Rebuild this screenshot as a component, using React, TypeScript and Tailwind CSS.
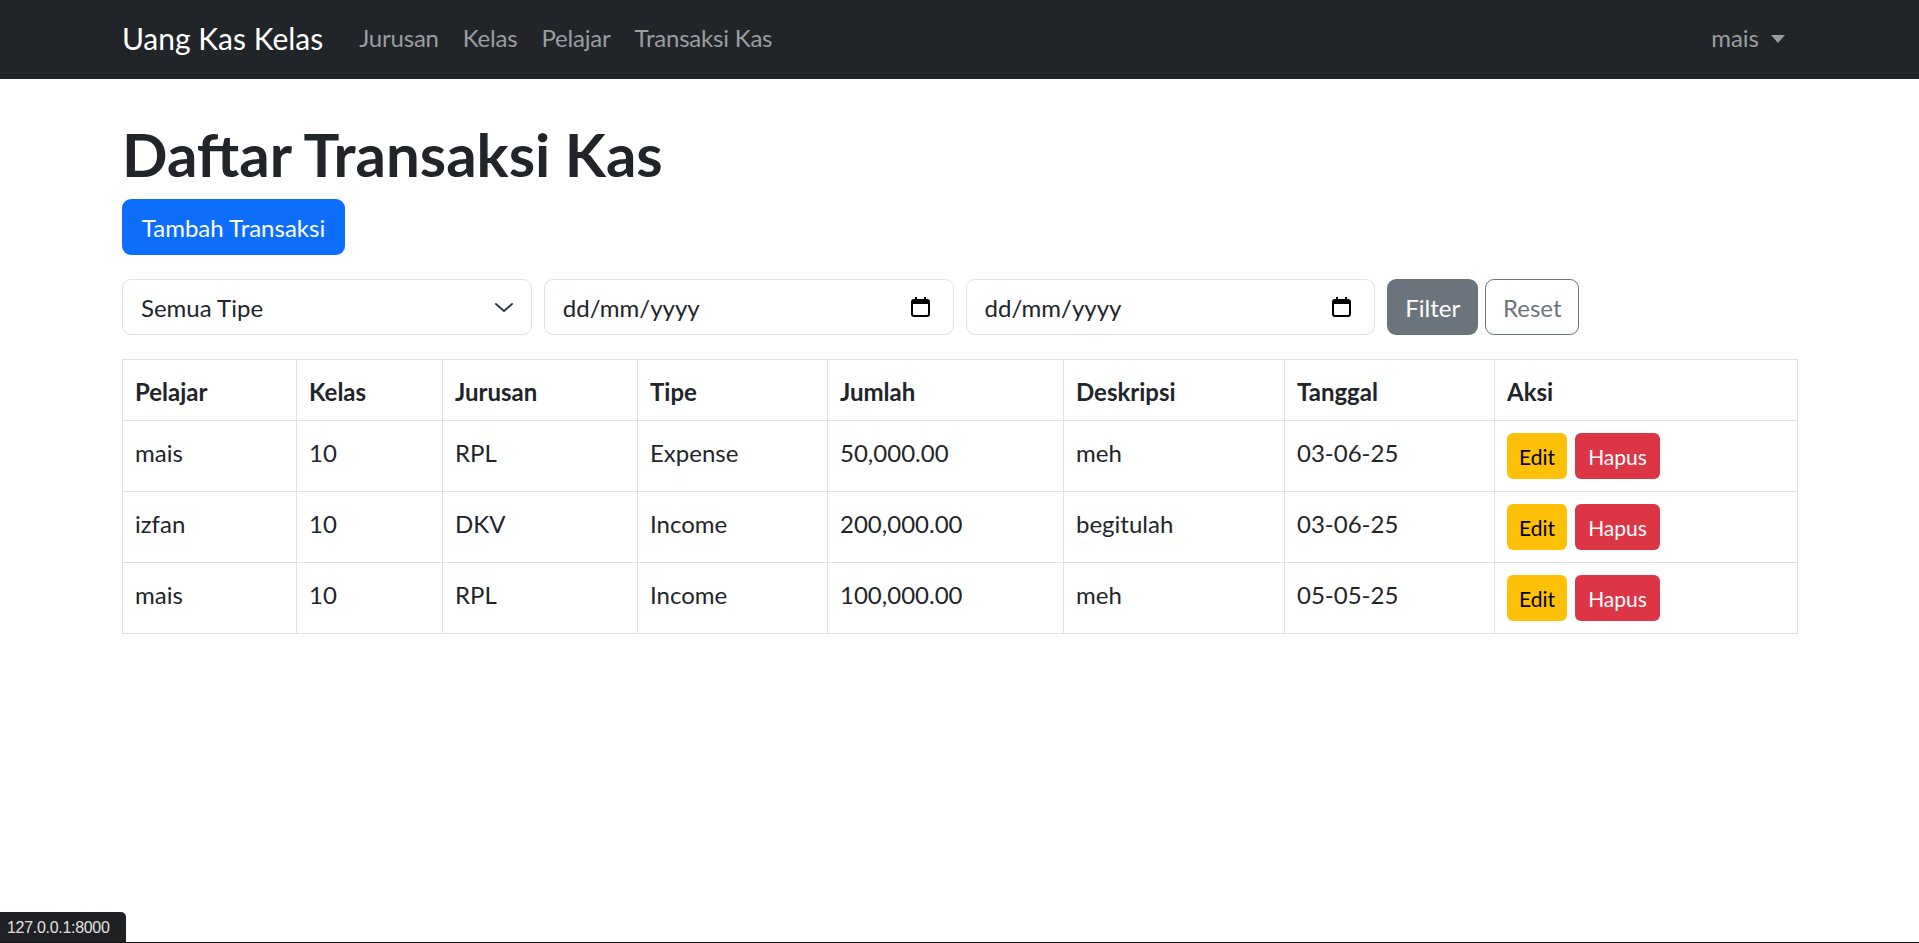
import React from 'react';

const rows = [
  { pelajar: 'mais', kelas: '10', jurusan: 'RPL', tipe: 'Expense', jumlah: '50,000.00', deskripsi: 'meh', tanggal: '03-06-25' },
  { pelajar: 'izfan', kelas: '10', jurusan: 'DKV', tipe: 'Income', jumlah: '200,000.00', deskripsi: 'begitulah', tanggal: '03-06-25' },
  { pelajar: 'mais', kelas: '10', jurusan: 'RPL', tipe: 'Income', jumlah: '100,000.00', deskripsi: 'meh', tanggal: '05-05-25' },
];

const headers = [
  { label: 'Pelajar', w: 'w-[174px]' },
  { label: 'Kelas', w: 'w-[146px]' },
  { label: 'Jurusan', w: 'w-[195px]' },
  { label: 'Tipe', w: 'w-[190px]' },
  { label: 'Jumlah', w: 'w-[236px]' },
  { label: 'Deskripsi', w: 'w-[221px]' },
  { label: 'Tanggal', w: 'w-[210px]' },
  { label: 'Aksi', w: 'w-[303px]' },
];

function CalendarIcon() {
  return (
    <svg width="19" height="20" viewBox="0 0 19 20" aria-hidden="true">
      <rect x="1" y="3" width="17" height="16" rx="2" fill="none" stroke="#000" strokeWidth="2" />
      <rect x="1" y="3" width="17" height="4" fill="#000" />
      <rect x="4" y="0" width="2" height="4" fill="#000" />
      <rect x="13" y="0" width="2" height="4" fill="#000" />
    </svg>
  );
}

function DateField() {
  return (
    <div className="flex h-[56px] items-center justify-between rounded-[9px] border border-[#dee2e6] bg-white pl-[18px] pr-[23px] text-[24px] text-[#212529]">
      <span className="pt-[2px]">dd/mm/yyyy</span>
      <CalendarIcon />
    </div>
  );
}

export default function App() {
  return (
    <div className="min-h-screen bg-white text-[#212529]" style={{ fontFamily: 'Lato, "Liberation Sans", sans-serif' }}>
      {/* navbar */}
      <nav className="h-[79px] bg-[#212529]">
        <div className="mx-auto flex h-full w-[1675px] items-center justify-between pb-[3px]">
          <div className="flex items-center">
            <span className="mr-[24px] text-[30px] leading-[45px] text-white">Uang Kas Kelas</span>
            <div className="flex text-[24px] leading-[36px] tracking-[-0.2px] text-[#9a9da0]">
              <a className="px-[12px]">Jurusan</a>
              <a className="px-[12px]">Kelas</a>
              <a className="px-[12px]">Pelajar</a>
              <a className="px-[12px]">Transaksi Kas</a>
            </div>
          </div>
          <a className="flex items-center px-[12px] text-[24px] leading-[36px] text-[#9a9da0]">
            mais
            <span className="ml-[12px] mt-[2px] h-0 w-0 border-x-[7px] border-t-[8px] border-x-transparent border-t-[#9a9da0]" />
          </a>
        </div>
      </nav>

      <main className="mx-auto w-[1675px] pt-[39px]">
        <h1 className="mb-[9px] text-[60px] font-bold leading-[72px]">Daftar Transaksi Kas</h1>

        <button className="mb-[24px] flex h-[56px] w-[223px] items-center justify-center rounded-[9px] bg-[#0d6efd] pt-[2px] text-[24px] text-white">
          Tambah Transaksi
        </button>

        {/* filter */}
        <div className="mb-[24px] grid grid-cols-4 gap-x-[12px]">
          <div className="flex h-[56px] items-center justify-between rounded-[9px] border border-[#dee2e6] bg-white pl-[18px] pr-[17px] text-[24px]">
            <span className="pt-[2px]">Semua Tipe</span>
            <svg width="20" height="11" viewBox="0 0 20 11" aria-hidden="true">
              <polyline points="2,2 10,9 18,2" fill="none" stroke="#343a40" strokeWidth="2" strokeLinecap="round" strokeLinejoin="round" />
            </svg>
          </div>
          <DateField />
          <DateField />
          <div className="flex gap-[7px]">
            <button className="flex h-[56px] w-[91px] items-center justify-center rounded-[9px] bg-[#6c757d] pt-[2px] text-[24px] text-white">
              Filter
            </button>
            <button className="flex h-[56px] w-[94px] items-center justify-center rounded-[9px] border-[1.5px] border-[#6c757d] pt-[2px] text-[24px] text-[#6c757d]">
              Reset
            </button>
          </div>
        </div>

        {/* table */}
        <table className="w-[1675px] table-fixed border-collapse text-left text-[24px]">
          <thead>
            <tr>
              {headers.map((h) => (
                <th key={h.label} className={`${h.w} border border-[#dee2e6] px-[12px] pb-[10px] pt-[14px] align-top font-bold leading-[36px]`}>
                  {h.label}
                </th>
              ))}
            </tr>
          </thead>
          <tbody>
            {rows.map((r, i) => (
              <tr key={i}>
                {[r.pelajar, r.kelas, r.jurusan, r.tipe, r.jumlah, r.deskripsi, r.tanggal].map((v, j) => (
                  <td key={j} className="border border-[#dee2e6] px-[12px] pb-[10px] pt-[14px] align-top leading-[36px]">
                    {v}
                  </td>
                ))}
                <td className="border border-[#dee2e6] px-[12px] py-[12px] align-top">
                  <div className="flex gap-[8px]">
                    <button className="flex h-[46px] w-[60px] items-center justify-center rounded-[6px] bg-[#ffc107] pt-[2px] text-[21px] text-black">
                      Edit
                    </button>
                    <button className="flex h-[46px] w-[85px] items-center justify-center rounded-[6px] bg-[#dc3545] pt-[2px] text-[21px] text-white">
                      Hapus
                    </button>
                  </div>
                </td>
              </tr>
            ))}
          </tbody>
        </table>
      </main>

      {/* browser status bubble */}
      <div
        className="fixed bottom-0 left-0 flex h-[31px] w-[126px] items-center rounded-tr-[5px] bg-[#202124] pl-[7px] text-[16px] tracking-[-0.3px] text-[#e0e0e0]"
        style={{ fontFamily: '"Liberation Sans", Arial, sans-serif' }}
      >
        127.0.0.1:8000
      </div>
      <div className="fixed bottom-0 left-0 h-px w-full bg-[#111]" />
    </div>
  );
}
